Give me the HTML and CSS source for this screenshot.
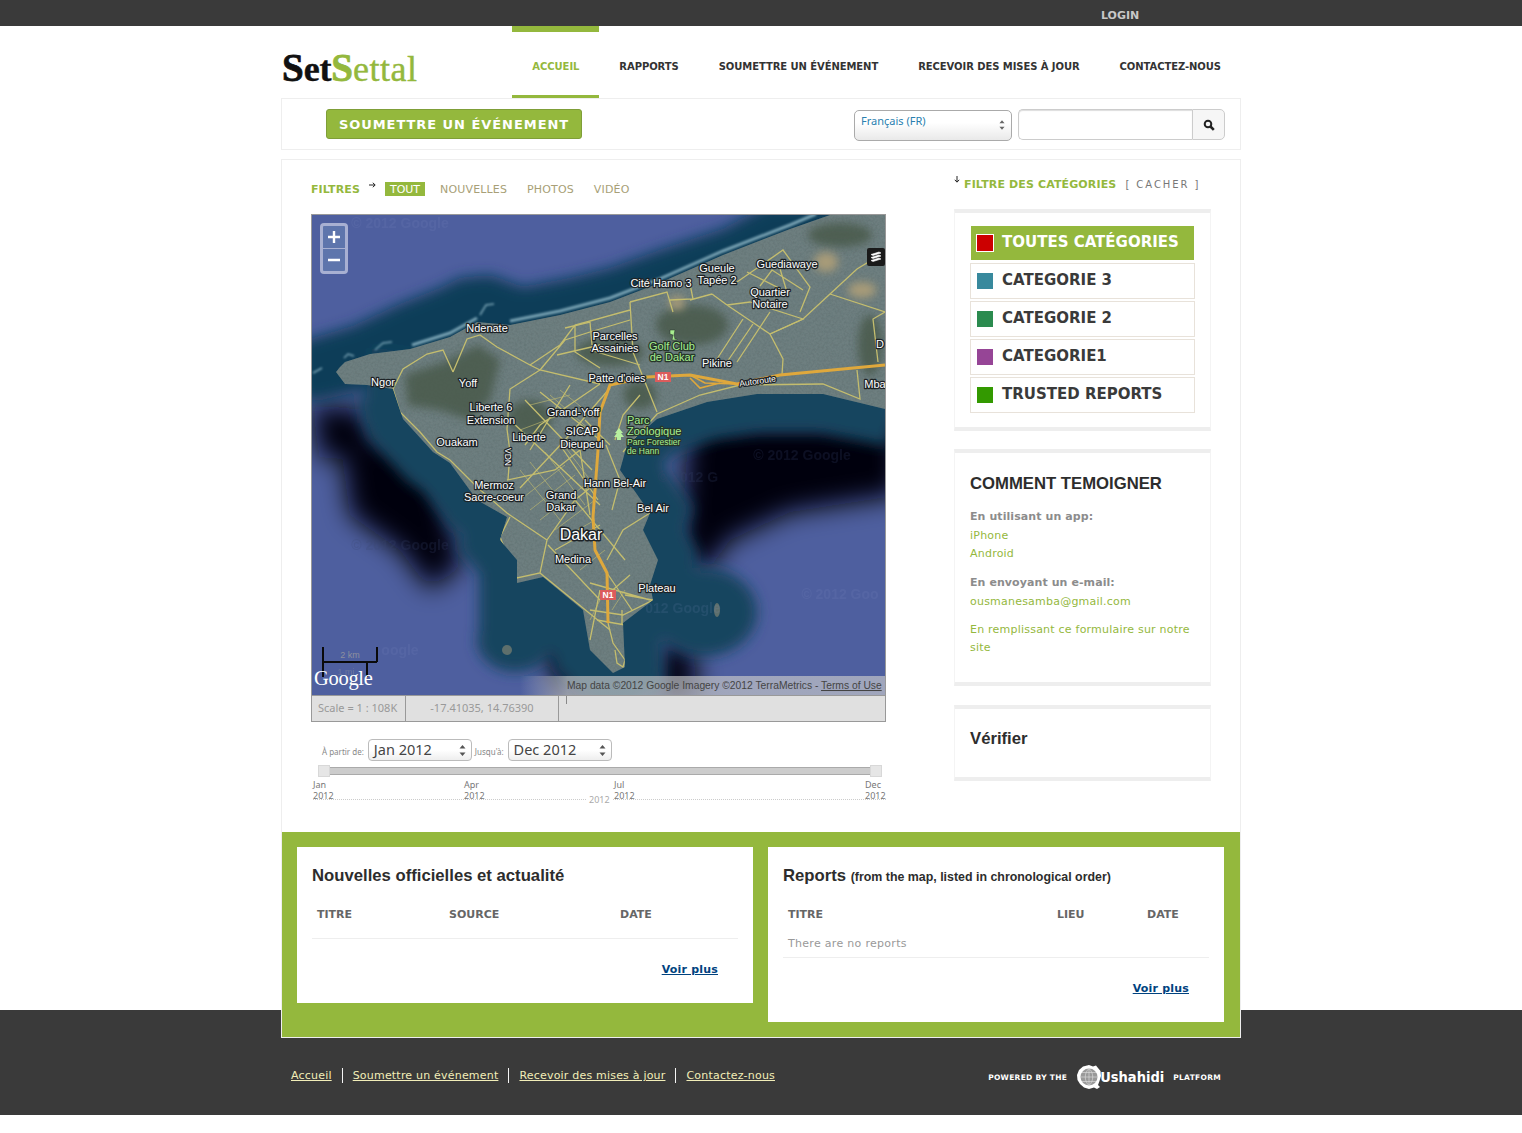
FILE: index.html
```html
<!DOCTYPE html>
<html lang="fr">
<head>
<meta charset="utf-8">
<title>SetSettal</title>
<link rel="stylesheet" href="styles.css">
</head>
<body>
<div class="topbar"><div class="wrap"><a class="login" href="#">LOGIN</a></div></div>
<div class="wrap page">
  <header class="header">
    <a class="logo" href="#"><span class="logo-b">S</span><span class="logo-k">et</span><span class="logo-g"><span class="logo-b">S</span><span class="logo-e">ettal</span></span></a>
    <nav class="nav">
      <a class="active" href="#">ACCUEIL</a>
      <a href="#">RAPPORTS</a>
      <a href="#">SOUMETTRE UN ÉVÉNEMENT</a>
      <a href="#">RECEVOIR DES MISES À JOUR</a>
      <a href="#">CONTACTEZ-NOUS</a>
    </nav>
  </header>

  <div class="toolbar">
    <a class="submit" href="#">SOUMETTRE UN ÉVÉNEMENT</a>
    <div class="lang"><span>Français (FR)</span><svg class="updown" viewBox="0 0 7 11"><path d="M3.5 0L6.5 3.5H.5zM3.5 11L.5 7.5H6.5z"/></svg></div>
    <div class="search">
      <div class="search-input"></div>
      <button class="search-btn" type="button" aria-label="Rechercher"><svg viewBox="0 0 12 12"><circle cx="5" cy="5" r="3.3" fill="none" stroke="#222" stroke-width="2"/><path d="M7.5 7.5L10.8 10.8" stroke="#222" stroke-width="2.6"/></svg></button>
    </div>
  </div>

  <main class="main">
    <div class="columns">
      <section class="left">
        <div class="filters">
          <strong class="filters-title">FILTRES</strong>
          <svg class="tiny-arrow" viewBox="0 0 7 6"><path d="M0 3H6M3.8 .8L6.2 3L3.8 5.2" fill="none" stroke="#222"/></svg>
          <a class="pill" href="#">TOUT</a>
          <a href="#">NOUVELLES</a>
          <a href="#">PHOTOS</a>
          <a href="#">VIDÉO</a>
        </div>

        <div class="map">
          <svg class="map-svg" viewBox="312 215 573 480" width="573" height="480">
            <defs>
              <filter id="b14" x="-40%" y="-40%" width="180%" height="180%"><feGaussianBlur stdDeviation="13"/></filter>
              <filter id="b7" x="-30%" y="-30%" width="160%" height="160%"><feGaussianBlur stdDeviation="7"/></filter>
              <filter id="b3" x="-30%" y="-30%" width="160%" height="160%"><feGaussianBlur stdDeviation="4"/></filter>
              <filter id="b05" x="-5%" y="-5%" width="110%" height="110%"><feGaussianBlur stdDeviation="1"/></filter>
              <filter id="grain" x="0" y="0" width="100%" height="100%">
                <feTurbulence type="fractalNoise" baseFrequency=".45" numOctaves="2" seed="7" result="n"/>
                <feColorMatrix in="n" type="matrix" values="0 0 0 0 .1 0 0 0 0 .15 0 0 0 0 .15 .9 0 0 0 -.3" result="d"/>
                <feComposite in="d" in2="SourceAlpha" operator="in" result="dc"/>
                <feMerge><feMergeNode in="SourceGraphic"/><feMergeNode in="dc"/></feMerge>
              </filter>
              <clipPath id="landclip"><path d="M336 372L340 367L345 362L370 354L410 349L450 337L477 322L510 325L560 315L610 302L657 284L723 255L790 229L830 215H885V409L823 394L757 394L707 402L657 419L627 445L620 470L650 513L643 530L658 560L650 585L653 600L623 623L625 667L613 673L590 650L583 610L543 577L517 583L517 560L500 540L507 517L477 500L450 463L433 452L403 419L393 389L367 385L345 384Z"/></clipPath>
            </defs>
            <rect class="sea" x="312" y="215" width="573" height="480"/>
            <g class="black" filter="url(#b14)">
              <path d="M340 440L395 440L440 480L462 565L430 590L400 550L350 515Z"/>
              <path d="M312 405L365 410L375 450L320 460Z"/>
              <path d="M690 420H900V495L790 512L730 540L708 570L680 560L685 480Z"/>
              <path d="M660 645L692 640L698 700L655 700Z"/>
              <path d="M535 620L572 640L600 700L560 690Z"/>
            </g>
            <g filter="url(#b7)">
              <path class="teal-n" d="M300 342L353 326L400 304L440 288L460 278L490 275L523 287L570 278L610 268L660 250L723 229L767 205H895V310L600 340L320 400L300 400Z"/>
              <path class="halo-s" d="M895 409L823 394L757 394L707 402L657 419L627 445L620 470L650 513L643 530L658 560L653 600L623 623L625 667L613 673L590 650L583 610L543 577L517 583L517 560L500 540L507 517L477 500L450 463L433 452L403 419L393 389L367 385"/>
              <ellipse class="teal" cx="705" cy="612" rx="52" ry="44"/>
              <ellipse class="teal" cx="515" cy="640" rx="38" ry="32"/>
            </g>
            <path class="surf" filter="url(#b05)" d="M412 345L450 333L477 318M510 321L560 311L610 298L657 280L723 251L790 225L816 214"/>
            <path class="surf thin" filter="url(#b05)" d="M375 350L383 343L392 342M344 358L348 354L354 356M313 373L322 368M480 315L486 305L494 304"/>
            <path class="land" filter="url(#grain)" d="M336 372L340 367L345 362L370 354L410 349L450 337L477 322L510 325L560 315L610 302L657 284L723 255L790 229L830 215H885V409L823 394L757 394L707 402L657 419L627 445L620 470L650 513L643 530L658 560L650 585L653 600L623 623L625 667L613 673L590 650L583 610L543 577L517 583L517 560L500 540L507 517L477 500L450 463L433 452L403 419L393 389L367 385L345 384Z"/>
            <ellipse class="isle" cx="717" cy="610" rx="3" ry="7"/>
            <ellipse class="isle" cx="507" cy="650" rx="5" ry="5"/>
            <g clip-path="url(#landclip)">
              <g class="patch-g" filter="url(#b3)">
                <path d="M405 375L445 362L478 345L500 360L490 400L470 420L440 410L408 405Z"/>
                <ellipse cx="692" cy="325" rx="36" ry="20"/>
                <ellipse cx="610" cy="352" rx="34" ry="14"/>
                <ellipse cx="840" cy="235" rx="32" ry="12"/>
                <ellipse cx="870" cy="345" rx="12" ry="30"/>
                <ellipse cx="530" cy="418" rx="22" ry="18"/>
                <ellipse cx="640" cy="395" rx="16" ry="14"/>
              </g>
              <g class="patch-s" filter="url(#b3)">
                <ellipse cx="826" cy="262" rx="12" ry="10"/>
                <ellipse cx="677" cy="303" rx="8" ry="7"/>
                <ellipse cx="862" cy="290" rx="14" ry="8"/>
              </g>
            </g>
            <g class="rd" clip-path="url(#landclip)">
              <path d="M453 372L443 350L427 354L403 369L393 389L400 412L420 432L437 452L450 460L477 487L507 513L547 540L540 573L517 578L500 537L510 517"/>
              <path d="M453 372L467 339L480 335L497 347L530 365L540 370L600 384"/>
              <path d="M540 370L510 389L507 429L510 452L508 480"/>
              <path d="M885 252L857 269L830 294L803 319L770 334L783 359L782 375"/>
              <path d="M830 294L885 312M885 312L873 319L878 362"/>
              <path d="M727 305L770 334M727 305L750 302L803 319L770 334"/>
              <path d="M717 359L743 319M727 362L753 324M737 362L770 312"/>
              <path d="M737 282L783 250L810 287L800 312M747 272L787 292L778 262M760 286L772 270L803 290"/>
              <path d="M712 294L727 305M630 302L667 292L673 312M690 300L712 294M690 284L693 299L670 300"/>
              <path d="M857 370L860 399L823 384L740 385L700 395L657 414L623 452"/>
              <path d="M630 302L633 352L657 412M540 370L565 340L590 332L630 320M530 365L560 345M560 345L575 325L630 310M575 325L575 352L600 368"/>
              <path d="M557 355L600 345M565 328L590 322L592 345M590 350L640 365M600 384L540 425L525 445M610 388L565 440L520 488M525 400L592 470M510 420L600 505M540 392L600 440M570 385L530 450M585 420L610 445M547 540L575 500L600 480M507 480L555 470L580 450M580 450L590 515M540 573L610 630M555 550L600 525M575 500L625 560M548 545L600 600M600 590L590 640"/>
              <path d="M650 513L623 530L607 560M607 573L632 610M625 595L653 600L623 615L590 610M590 583L650 600M607 595L630 575M608 623L613 643L625 660L623 667L617 663L615 650M597 620L625 625M622 610L622 625"/>
              <path d="M615 440L623 415L640 395M606 445L620 480L612 510M598 500L560 445"/>
              <path class="rd-thin" d="M520 500L565 465M530 510L575 475M540 520L585 485M555 530L595 500M560 540L595 520M520 470L560 520M530 462L570 512M545 452L585 505M560 440L590 480M550 395L590 430M560 390L595 418M530 405L570 395M520 430L560 415M590 620L600 600M612 610L625 590M580 570L605 550"/>
            </g>
            <path class="hw" clip-path="url(#landclip)" d="M885 365L780 375L737 384L690 375L647 377L610 385L600 412L598 450L593 517L595 550L607 573L608 623"/>
            <path class="hw thin" d="M690 375L705 383L737 384M690 378L700 388L720 383"/>

            <text class="wm" x="400" y="228" text-anchor="middle">© 2012 Google</text>
            <text class="wm dark" x="802" y="460" text-anchor="middle">© 2012 Google</text>
            <text class="wm dark" x="688" y="482" text-anchor="middle">© 2012 G</text>
            <text class="wm" x="840" y="599" text-anchor="middle">© 2012 Goo</text>
            <text class="wm" x="683" y="613" text-anchor="middle">012 Google</text>
            <text class="wm" x="400" y="655" text-anchor="middle">oogle</text>
            <text class="wm dark" x="400" y="550" text-anchor="middle">© 2012 Google</text>

            <g class="lab">
              <text x="661" y="287">Cité Hamo 3</text>
              <text x="717" y="272">Gueule</text><text x="717" y="284">Tapée 2</text>
              <text x="787" y="268">Guediawaye</text>
              <text x="770" y="296">Quartier</text><text x="770" y="308">Notaire</text>
              <text x="487" y="332">Ndenate</text>
              <text x="615" y="340">Parcelles</text><text x="615" y="352">Assainies</text>
              <text x="717" y="367">Pikine</text>
              <text x="617" y="382">Patte d'oies</text>
              <text x="383" y="386">Ngor</text>
              <text x="468" y="387">Yoff</text>
              <text x="491" y="411">Liberte 6</text><text x="491" y="424">Extension</text>
              <text x="573" y="416">Grand-Yoff</text>
              <text x="582" y="435">SICAP</text><text x="582" y="448">Dieupeul</text>
              <text x="529" y="441">Liberte</text>
              <text x="457" y="446">Ouakam</text>
              <text x="615" y="487">Hann Bel-Air</text>
              <text x="494" y="489">Mermoz</text><text x="494" y="501">Sacre-coeur</text>
              <text x="561" y="499">Grand</text><text x="561" y="511">Dakar</text>
              <text x="653" y="512">Bel Air</text>
              <text class="big" x="581" y="540">Dakar</text>
              <text x="573" y="563">Medina</text>
              <text x="657" y="592">Plateau</text>
              <text x="875" y="388">Mba</text>
              <text x="880" y="348">D</text>
              <text class="small" transform="translate(758 384) rotate(-8)" x="0" y="0">Autoroute</text>
              <text class="small" transform="translate(505 457) rotate(90)" x="0" y="0">VDN</text>
            </g>
            <g class="lab green">
              <text x="672" y="350">Golf Club</text><text x="672" y="361">de Dakar</text>
              <text x="627" y="424" class="start">Parc</text>
              <text x="627" y="435" class="start">Zoologique</text>
              <text x="627" y="445" class="start small">Parc Forestier</text>
              <text x="627" y="454" class="start small">de Hann</text>
            </g>
            <path class="golf" d="M670 330h5l-1 5 1 4h2v1h-5l1-5-3-1z"/>
            <path class="tree" d="M619 428l4 5h-2l3 4h-3v3h-4v-3h-3l3-4h-2z"/>
            <g class="badge"><rect x="655" y="372" width="16" height="10"/><text x="663" y="380">N1</text></g>
            <g class="badge"><rect x="600" y="590" width="16" height="10"/><text x="608" y="598">N1</text></g>

            <g class="zoomctl">
              <rect class="zoom-outer" x="320" y="223" width="28" height="51" rx="4"/>
              <rect class="zoom-inner" x="323" y="226" width="22" height="45" rx="1"/>
              <path class="zoom-sep" d="M323 248.500H345"/>
              <path class="zoom-sym" d="M334 231V243M328 237H340M328 260H340"/>
            </g>
            <rect class="layers-bg" x="867" y="248" width="18" height="18" rx="2"/>
            <path class="layers" d="M871 254.500L879 252L881 253L873 255.500ZM871 257.500L879 255L881 256L873 258.500ZM871 260.500L879 258L881 259L873 261.500Z"/>

            <defs><linearGradient id="copy"><stop offset="0" stop-color="#ccc" stop-opacity="0"/><stop offset=".13" stop-color="#ccc" stop-opacity=".65"/><stop offset="1" stop-color="#ccc" stop-opacity=".65"/></linearGradient></defs>
            <rect x="520" y="676" width="365" height="19" fill="url(#copy)"/>
            <text class="copy" x="567" y="689">Map data ©2012 Google Imagery ©2012 TerraMetrics - <tspan class="copy-link">Terms of Use</tspan></text>

            <path class="scale" d="M323 647V677M323 662H377M377 647V662M367 662V677"/>
            <text class="scale-t" x="350" y="658">2 km</text>
            <text class="scale-t faint" x="346" y="675">1 mi</text>
            <text class="google" x="314" y="685">Google</text>
          </svg>
          <div class="status">
            <span class="st-scale">Scale = 1 : 108K</span>
            <span class="st-coord">-17.41035, 14.76390</span>
            <span class="st-rest"><i class="st-tick"></i></span>
          </div>
        </div>

        <div class="timeline">
          <div class="range">
            <label>À partir de:</label>
            <div class="tsel"><span>Jan 2012</span><svg class="updown" viewBox="0 0 7 11"><path d="M3.500 0L6.500 3.500H.5zM3.500 11L.5 7.500H6.500z"/></svg></div>
            <label>Jusqu'à:</label>
            <div class="tsel"><span>Dec 2012</span><svg class="updown" viewBox="0 0 7 11"><path d="M3.500 0L6.500 3.500H.5zM3.500 11L.5 7.500H6.500z"/></svg></div>
          </div>
          <div class="slider"><i class="handle"></i><i class="handle"></i></div>
          <div class="ticks">
            <span>Jan<br>2012</span><span>Apr<br>2012</span><span>Jul<br>2012</span><span>Dec<br>2012</span>
            <em class="year">2012</em>
          </div>
        </div>
      </section>

      <aside class="right">
        <div class="cat-head">
          <svg class="tiny-arrow down" viewBox="0 0 6 7"><path d="M3 0V6M.8 3.800L3 6.200L5.200 3.800" fill="none" stroke="#222"/></svg>
          <strong>FILTRE DES CATÉGORIES</strong>
          <span class="hide">[ <a href="#">CACHER</a> ]</span>
        </div>
        <div class="box cats">
          <a class="cat on" href="#"><i class="sw sw-red"></i><span>TOUTES CATÉGORIES</span></a>
          <a class="cat" href="#"><i class="sw sw-teal"></i><span>CATEGORIE 3</span></a>
          <a class="cat" href="#"><i class="sw sw-green"></i><span>CATEGORIE 2</span></a>
          <a class="cat" href="#"><i class="sw sw-purple"></i><span>CATEGORIE1</span></a>
          <a class="cat" href="#"><i class="sw sw-lime"></i><span>TRUSTED REPORTS</span></a>
        </div>
        <div class="box how">
          <h3>COMMENT TEMOIGNER</h3>
          <p><strong>En utilisant un app:</strong><br><a href="#">iPhone</a><br><a href="#">Android</a></p>
          <p><strong>En envoyant un e-mail:</strong><br><a href="#">ousmanesamba@gmail.com</a></p>
          <p class="last"><a href="#">En remplissant ce formulaire sur notre site</a></p>
        </div>
        <div class="box verify"><h3>Vérifier</h3></div>
      </aside>
    </div>

    <div class="green">
      <section class="card card-news">
        <h2>Nouvelles officielles et actualité</h2>
        <table class="tbl tbl-news">
          <thead><tr><th class="c1">TITRE</th><th class="c2">SOURCE</th><th>DATE</th></tr></thead>
        </table>
        <div class="more"><a href="#">Voir plus</a></div>
      </section>
      <section class="card card-reports">
        <h2>Reports <small>(from the map, listed in chronological order)</small></h2>
        <table class="tbl tbl-rep">
          <thead><tr><th class="c1">TITRE</th><th class="c2">LIEU</th><th>DATE</th></tr></thead>
          <tbody><tr><td colspan="3">There are no reports</td></tr></tbody>
        </table>
        <div class="more"><a href="#">Voir plus</a></div>
      </section>
    </div>
  </main>
</div>

<footer class="footer">
  <div class="wrap footer-in">
    <div class="foot-links">
      <a href="#">Accueil</a><a href="#">Soumettre un événement</a><a href="#">Recevoir des mises à jour</a><a href="#">Contactez-nous</a>
    </div>
    <div class="powered">
      <span class="pw">POWERED BY THE</span>
      <svg class="globe" viewBox="0 0 26 26" width="26" height="26">
        <path class="globe-blob" d="M13 1L17 2.500L20 1.500L22 4L24.500 7L25 12L23.500 17L22 21L24 23L21 25L18 23.500L13 25L8 23.500L4 20L1.500 16L1 11L3 6L7 2.500Z"/>
        <circle class="globe-in" cx="13" cy="13" r="8.500"/>
        <path class="globe-l" d="M4.500 13H21.500M6 8.500H20M6 17.500H20M13 4.500V21.500M13 4.500C8 9 8 17 13 21.500M13 4.500C18 9 18 17 13 21.500"/>
      </svg>
      <span class="ush">Ushahidi</span>
      <span class="pw">PLATFORM</span>
    </div>
  </div>
</footer>
</body>
</html>
```

FILE: styles.css
```css
* { box-sizing: border-box; }
body { margin: 0; background: #fff; font-family: "DejaVu Sans", sans-serif; font-size: 11px; color: #3a3a3a; }
a { color: inherit; text-decoration: none; }
.wrap { width: 960px; margin: 0 auto; }

.topbar { height: 26px; background: #3a3a3a; }
.login { display: block; padding: 9px 0 0 820px; font-weight: bold; font-size: 11px; line-height: 14px; color: #c8c8c8; }

.page { position: relative; z-index: 1; }
.header { display: flex; justify-content: space-between; height: 72px; }
.logo { display: block; padding: 22px 0 0 1px; line-height: 40px; font-family: "Liberation Serif", serif; font-size: 36px; color: #111; white-space: nowrap; -webkit-text-stroke: .4px currentColor; }
.logo-b { font-weight: bold; font-size: 39px; -webkit-text-stroke: .8px currentColor; }
.logo-k { font-weight: bold; letter-spacing: -.2px; }
.logo-g { color: #94b83d; }
.logo-e { font-size: 36px; letter-spacing: .5px; }
.nav { display: flex; }
.nav a { display: block; height: 72px; padding: 28px 20px 0; border-top: 6px solid transparent; border-bottom: 3px solid transparent; font-weight: bold; font-size: 10px; line-height: 14px; color: #333; white-space: nowrap; letter-spacing: -.07px; }
.nav a.active { color: #94b83d; border-color: #94b83d; }

.toolbar { display: flex; align-items: flex-start; height: 52px; padding: 10px 15px 0 44px; border: 1px solid #eee; }
.submit { display: block; width: 256px; height: 30px; background: #94b83d; border: 1px solid #7f9e38; border-radius: 3px; color: #fff; font-weight: bold; font-size: 13px; line-height: 29px; text-align: center; letter-spacing: .95px; white-space: nowrap; }
.lang { display: flex; justify-content: space-between; width: 158px; height: 31px; margin: 1px 0 0 auto; padding: 2px 6px 0 6px; border: 1px solid #aaa; border-radius: 5px; background: linear-gradient(#fff 40%, #e9e9e9); font-family: "Noto Sans", sans-serif; font-size: 11px; line-height: 16px; color: #2a7fb0; }
.updown { width: 6px; height: 10px; margin-top: 7px; fill: #666; }
.search { display: flex; margin-left: 6px; }
.search-input { width: 174px; height: 31px; border: 1px solid #ccc; border-right: 0; border-radius: 5px 0 0 5px; box-shadow: inset 0 1px 1px #ddd; }
.search-btn { display: flex; align-items: center; justify-content: center; width: 33px; height: 31px; padding: 0; background: #f6f6f6; border: 1px solid #ccc; border-radius: 0 5px 5px 0; }
.search-btn svg { width: 12px; height: 12px; margin-top: 1px; }

.main { margin-top: 9px; border: 1px solid #eee; }
.columns { display: grid; grid-template-columns: 575px 257px; column-gap: 68px; padding: 0 29px; }
.left { padding: 22px 0 32px; }

.filters { display: flex; align-items: center; height: 14px; margin-bottom: 18px; font-size: 11px; color: #a89f77; letter-spacing: .15px; }
.filters-title { color: #94b83d; font-size: 11px; letter-spacing: .1px; }
.tiny-arrow { width: 7px; height: 6px; margin: 0 9px; align-self: flex-start; }
.filters a { margin-right: 20px; }
.filters .pill { margin-right: 15px; padding: 0 5px; height: 14px; line-height: 15px; background: #94b83d; color: #fff; letter-spacing: 0; }

.map { border: 1px solid #999; }
.map-svg { display: block; }
.sea { fill: #4e5f9f; }
.black { fill: #02060e; }
.teal-n { fill: #103c58; }
.halo-s { fill: none; stroke: #17455f; stroke-width: 76px; }
.teal { fill: #17455f; }
.surf { fill: none; stroke: #9cc4d2; stroke-width: 3px; stroke-opacity: .75; }
.surf.thin { stroke-width: 1.500px; }
.land { fill: #6e7f80; }
.isle { fill: #5e6f6c; }
.patch-g { fill: #4a5a4c; opacity: .85; }
.patch-s { fill: #a89b78; }
.rd { fill: none; stroke: #c4bd6e; stroke-width: 1.300px; }
.rd-thin { stroke-width: .8px; opacity: .75; }
.hw { fill: none; stroke: #dfa83c; stroke-width: 3px; }
.hw.thin { stroke-width: 1.600px; }
.wm { font-family: "Liberation Sans", sans-serif; font-size: 14px; font-weight: bold; fill: #8896c8; opacity: .12; }
.wm.dark { fill: #3a4770; opacity: .22; }
.lab text { font-family: "Liberation Sans", sans-serif; font-size: 11px; fill: #fff; stroke: #1d2326; stroke-width: 2.500px; paint-order: stroke; stroke-linejoin: round; text-anchor: middle; }
.lab .big { font-size: 16px; stroke-width: 3px; }
.lab .small { font-size: 8.500px; }
.lab.green text { fill: #a8ee90; stroke: #25352a; }
.lab.green .small { font-size: 8.500px; }
.lab .start { text-anchor: start; }
.golf { fill: #a8ee90; stroke: #25352a; stroke-width: .5px; }
.tree { fill: #b8f0a0; }
.badge rect { fill: #dc5c5c; }
.badge text { font-family: "Liberation Sans", sans-serif; font-size: 8.500px; font-weight: bold; fill: #fff; text-anchor: middle; }
.zoom-outer { fill: #a8b0d2; }
.zoom-inner { fill: #5e75ac; }
.zoom-sep { stroke: #a8b0d2; stroke-width: 1px; }
.zoom-sym { fill: none; stroke: #fff; stroke-width: 2.400px; }
.layers-bg { fill: #1a1a1a; }
.layers { fill: #fff; stroke: #fff; stroke-width: .6px; }
.copy { font-family: "Liberation Sans", sans-serif; font-size: 10.300px; fill: #444; }
.copy-link { text-decoration: underline; }
.scale { fill: none; stroke: #0a0a0a; stroke-width: 2px; }
.scale-t { font-family: "Liberation Sans", sans-serif; font-size: 9px; fill: #8d8f9e; text-anchor: middle; }
.scale-t.faint { opacity: .45; }
.google { font-family: "Liberation Serif", serif; font-size: 20.500px; fill: #fff; letter-spacing: -.3px; }

.status { display: flex; height: 26px; background: #e0e0e0; border-top: 1px solid #999; font-family: "Noto Sans", sans-serif; font-size: 11px; line-height: 24px; color: #999; }
.status span { display: block; }
.st-scale { width: 94px; padding-left: 6px; border-right: 1px solid #999; white-space: nowrap; }
.st-coord { width: 153px; text-align: center; border-right: 1px solid #999; }
.st-rest { flex: 1; padding-left: 7px; }
.st-tick { display: block; width: 1px; height: 8px; background: #888; }

.timeline { margin-top: 17px; color: #666; }
.range { display: flex; align-items: center; height: 22px; padding-left: 11px; }
.range label { font-family: "Noto Sans", sans-serif; font-size: 8px; margin-top: 3px; color: #888; white-space: nowrap; }
.tsel { display: flex; justify-content: space-between; width: 104px; height: 22px; margin: 0 3px 0 4px; padding: 0 5px; border: 1px solid #bbb; border-radius: 4px; background: linear-gradient(#fff 50%, #eee); font-family: "Noto Sans", sans-serif; font-size: 14.500px; line-height: 19px; color: #444; }
.tsel .updown { margin-top: 5px; width: 7px; height: 11px; fill: #555; }
.slider { display: flex; justify-content: space-between; align-items: center; height: 8px; margin: 6px 4px 0 7px; background: #ccc; border-top: 1px solid #aaa; border-bottom: 1px solid #aaa; }
.handle { display: block; width: 12px; height: 12px; background: #e6e6e6; border: 1px solid #d8d8d8; }
.ticks { position: relative; display: grid; grid-template-columns: 151px 150px 251px auto; height: 21px; margin: 4px 0 0 2px; font-family: "Noto Sans", sans-serif; font-size: 9px; line-height: 11px; color: #777; border-bottom: 1px dotted #ccc; }
.year { position: absolute; left: 274px; top: 15px; padding: 0 2px; background: #fff; font-style: normal; color: #aaa; }

.right { padding-top: 16px; }
.cat-head { display: flex; align-items: center; height: 16px; margin-bottom: 17px; font-size: 11px; white-space: nowrap; }
.cat-head strong { color: #94b83d; letter-spacing: .13px; }
.tiny-arrow.down { width: 6px; height: 7px; margin: 0 4px 0 0; }
.hide { margin-left: 9px; font-size: 10px; letter-spacing: 1.950px; color: #777; }
.box { border: 1px solid #f4f4f4; border-top: 4px solid #eee; border-bottom: 4px solid #eee; padding: 0 15px; }
.cats { display: flex; flex-direction: column; gap: 2px; height: 222px; padding-top: 13px; }
.cat { display: flex; align-items: center; height: 36px; padding-left: 6px; border: 1px solid #e8e2da; font-weight: bold; font-size: 15px; line-height: 18px; color: #3a3a3a; white-space: nowrap; }
.cat span { margin-top: -3px; }
.cat .sw { width: 16px; height: 16px; margin-right: 9px; }
.cat.on { height: 34px; margin: 0 1px 1px; padding-left: 5px; border: 0; background: #94b83d; color: #fff; }
.cat.on .sw { width: 18px; height: 18px; margin-right: 8px; border: 1px solid #fff; }
.sw-red { background: #c00; }
.sw-teal { background: #38899d; }
.sw-green { background: #2b8b4f; }
.sw-purple { background: #964596; }
.sw-lime { background: #390; }

.how { height: 237px; margin-top: 18px; padding-top: 21px; font-size: 11px; line-height: 18.700px; color: #8c8c8c; letter-spacing: .22px; }
.how strong { letter-spacing: .08px; }
.box h3 { margin: 0; font-family: "Liberation Sans", sans-serif; font-weight: bold; font-size: 16.700px; line-height: 20px; color: #2d2d2d; letter-spacing: 0; }
.how h3 { margin-bottom: 14px; }
.how p { margin: 0 0 10px; }
.how p.last { margin-top: -1px; }
.how a { color: #94b83d; }
.verify { height: 76px; margin-top: 19px; padding-top: 20px; }

.green { display: grid; grid-template-columns: 456px 456px; column-gap: 15px; align-items: start; height: 205px; padding: 15px; background: #94b83d; }
.card { background: #fff; padding: 0 15px; }
.card-news { height: 156px; }
.card-reports { height: 175px; }
.card h2 { margin: 0; padding-top: 19px; font-family: "Liberation Sans", sans-serif; font-weight: bold; font-size: 16.700px; line-height: 20px; color: #2d2d2d; white-space: nowrap; }
.card h2 small { font-size: 12.400px; }
.tbl { width: 100%; margin-top: 16px; border-collapse: collapse; table-layout: fixed; }
.tbl th { padding: 0 5px; font-size: 11px; font-weight: bold; line-height: 14px; text-align: left; color: #666; }
.tbl-news thead tr { height: 36px; border-bottom: 1px solid #eee; }
.tbl-news th { padding-bottom: 10px; height: 36px; }
.tbl-news .c1 { width: 132px; }
.tbl-news .c2 { width: 171px; }
.tbl-rep .c1 { width: 269px; }
.tbl-rep .c2 { width: 90px; }
.tbl-rep th { height: 24px; }
.tbl-rep td { height: 30px; padding: 3px 5px 0; font-size: 11px; color: #999; letter-spacing: .3px; border-bottom: 1px solid #eee; }
.more { padding: 24px 20px 0 0; text-align: right; font-weight: bold; font-size: 11px; line-height: 14px; letter-spacing: .2px; }
.more a { color: #00427f; text-decoration: underline; }

.footer { position: relative; height: 105px; margin-top: -28px; background: #3a3a3a; }
.footer-in { display: flex; justify-content: space-between; padding: 58px 20px 0 0; }
.foot-links { display: flex; align-items: flex-start; height: 15px; font-size: 11px; line-height: 15px; letter-spacing: .2px; color: #f2eeb8; }
.foot-links a { padding: 0 10px; border-left: 1px solid #f5f5f5; text-decoration: underline; white-space: nowrap; }
.foot-links a:first-child { border-left: 0; }
.powered { display: flex; align-items: center; height: 26px; margin-top: -4px; color: #fff; }
.pw { font-size: 7.500px; font-weight: bold; letter-spacing: .3px; white-space: nowrap; }
.globe { margin: 0 -2px 0 9px; }
.globe-blob { fill: #fff; }
.globe-in { fill: #999; }
.globe-l { fill: none; stroke: #e0e0e0; stroke-width: .6px; }
.ush { margin-right: 9px; font-family: "DejaVu Sans Condensed", "DejaVu Sans", sans-serif; font-stretch: condensed; font-weight: bold; font-size: 14.500px; }
```
